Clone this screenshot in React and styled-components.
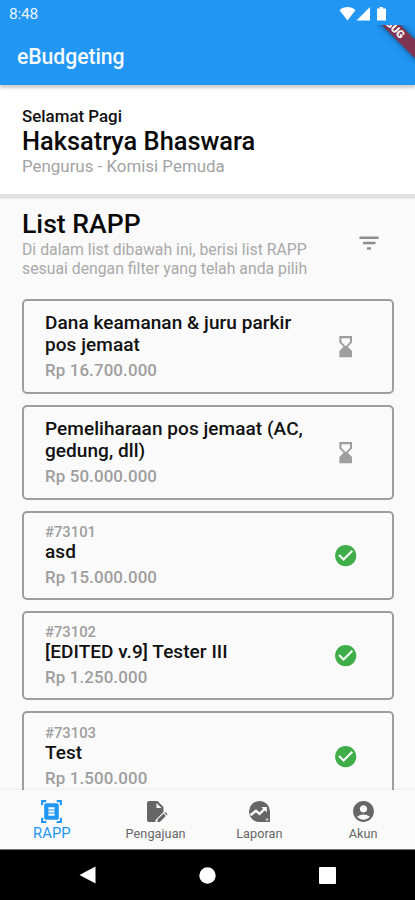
import React from 'react'
import styled, { createGlobalStyle } from 'styled-components'
import {
 MdHourglassBottom,
 MdCheckCircle,
 MdDocumentScanner,
 MdAccountCircle,
} from 'react-icons/md'

const GlobalStyle = createGlobalStyle`
 * {
  box-sizing: border-box;
 }
 body {
  margin: 0;
  font-family: Roboto, 'Liberation Sans', sans-serif;
 }
 h1, h2, h3, p {
  margin: 0;
 }
 svg {
  display: block;
 }
`

const Screen = styled.div`
 display: flex;
 flex-direction: column;
 width: 415px;
 height: 900px;
 overflow: hidden;
 background-color: #fafafa;
`

const StatusBar = styled.div`
 display: flex;
 flex-shrink: 0;
 align-items: center;
 justify-content: space-between;
 height: 25px;
 padding: 3px 28px 0 9px;
 background-color: #2196f3;
 color: #e9f4fe;
 font-size: 15.5px;
 letter-spacing: -0.2px;
`

const StatusIcons = styled.div`
 display: flex;
 align-items: center;
 padding-bottom: 1px;
`

const AppBar = styled.header`
 position: relative;
 z-index: 1;
 display: flex;
 flex-shrink: 0;
 align-items: center;
 height: 60px;
 padding: 3px 17px 0;
 overflow: hidden;
 background-color: #2196f3;
 box-shadow: 0 3px 3px rgba(0, 0, 0, 0.2);
 h1 {
  color: #f4faff;
  font-size: 21.2px;
  font-weight: 500;
  letter-spacing: -0.06px;
 }
`

const DebugBanner = styled.span`
 position: absolute;
 top: -7px;
 left: 340px;
 width: 101px;
 height: 13px;
 transform: rotate(45deg);
 background-color: #7f3450;
 box-shadow: 0 0 6px rgba(0, 0, 0, 0.5);
 color: #fff;
 font-size: 10.8px;
 font-weight: 900;
 line-height: 13px;
 text-align: center;
`

const Greeting = styled.section`
 flex-shrink: 0;
 height: 113px;
 padding: 21px 22px 0;
 border-bottom: 4px solid #e0e0e0;
 background-color: #fff;
 box-shadow: 0 1px 1px #ececec;
 p {
  color: #111;
  font-size: 16.9px;
  font-weight: 500;
  line-height: 21px;
 }
 h2 {
  color: #0a0a0a;
  font-size: 25.4px;
  font-weight: 500;
  line-height: 29px;
 }
 small {
  display: block;
  color: #a3a3a3;
  font-size: 16.9px;
  line-height: 21px;
 }
`

const Content = styled.main`
 flex: 1;
 min-height: 0;
 overflow: hidden;
 padding: 10px 21px 0 22px;
`

const ListHeader = styled.div`
 display: flex;
 align-items: flex-start;
 justify-content: space-between;
 height: 91px;
 padding-right: 15px;
 h2 {
  color: #0a0a0a;
  font-size: 26.6px;
  font-weight: 500;
  line-height: 32px;
 }
 p {
  color: #a9a9a9;
  font-size: 15.8px;
  line-height: 19px;
  white-space: nowrap;
 }
 svg {
  margin-top: 28px;
  color: #8e8e8e;
 }
`

const CardList = styled.div`
 display: flex;
 flex-direction: column;
 gap: 11px;
`

const Card = styled.article`
 display: flex;
 align-items: center;
 justify-content: space-between;
 flex-shrink: 0;
 height: ${({ $tall }) => ($tall ? '94.8px' : '89.4px')};
 padding: 1px 34px 0 21px;
 border: 2px solid #9e9e9e;
 border-radius: 5px;
`

const CardText = styled.div`
 width: 268px;
 small {
  display: block;
  color: #9e9e9e;
  font-size: 14.8px;
  font-weight: 500;
  line-height: 17px;
 }
 h3 {
  color: #111;
  font-size: 19px;
  font-weight: 500;
  line-height: 22px;
  letter-spacing: 0.06px;
  white-space: pre-line;
 }
 p {
  margin-top: 4px;
  color: #9e9e9e;
  font-size: 16.9px;
  font-weight: 500;
  line-height: 21px;
  letter-spacing: 0.12px;
 }
`

const BottomNav = styled.nav`
 display: grid;
 grid-template-columns: repeat(4, 1fr);
 flex-shrink: 0;
 height: 60px;
 border-bottom: 1px solid #777;
 background-color: #fafafa;
 box-shadow: 0 -1px 2px rgba(0, 0, 0, 0.06);
`

const NavItem = styled.a`
 display: flex;
 flex-direction: column;
 align-items: center;
 padding-top: 9px;
 color: ${({ $active }) => ($active ? '#2196f3' : '#666')};
 span {
  margin-top: ${({ $active }) => ($active ? '0' : '1px')};
  font-size: ${({ $active }) => ($active ? '14.8px' : '12.7px')};
  line-height: 18px;
  letter-spacing: 0.05px;
 }
`

const SystemNav = styled.div`
 display: flex;
 flex-shrink: 0;
 align-items: center;
 justify-content: space-between;
 height: 50px;
 padding: 0 79px;
 background-color: #000;
`

const FilterIcon = () => (
 <svg width="20" height="14" viewBox="0 0 20 14" fill="currentColor">
  <path d="M.5.5h19v2.500H.5zM4 5.800h12.500v2.500H4zM8 11.200h4v2.500H8z" />
 </svg>
)

const FileEditIcon = () => (
 <svg width="25" height="25" viewBox="0 0 25 25" fill="currentColor">
  <path d="M6 2h8.500l6 6v5l-8 8v2H6a2 2 0 0 1-2-2V4a2 2 0 0 1 2-2z" />
  <path d="M13.500 4v5h5z" fill="#fafafa" />
  <path d="M14.500 23v-2.400l6-6 2.400 2.400-6 6zM21.300 13.800l.9-.9 2.400 2.400-.9.900z" />
 </svg>
)

const ReportIcon = () => (
 <svg width="25" height="25" viewBox="0 0 25 25" fill="currentColor">
  <path d="M12.500 2A10.500 10.500 0 0 1 23 12.500V23H12.500a10.500 10.500 0 0 1 0-21z" />
  <path
   d="M3.500 16.300l5.500-4.500 3.600 3 6-5.800"
   fill="none"
   stroke="#fafafa"
   strokeWidth="2.400"
  />
  <path d="M14.300 8h5.500v5.500z" fill="#fafafa" />
  <path d="M18.500 20.700h3.200M20.100 19.100v3.200" stroke="#bbb" strokeWidth="1.200" />
 </svg>
)

const items = [
 { title: 'Dana keamanan & juru parkir\npos jemaat', price: 'Rp 16.700.000' },
 { title: 'Pemeliharaan pos jemaat (AC,\ngedung, dll)', price: 'Rp 50.000.000' },
 { code: '#73101', title: 'asd', price: 'Rp 15.000.000' },
 { code: '#73102', title: '[EDITED v.9] Tester III', price: 'Rp 1.250.000' },
 { code: '#73103', title: 'Test', price: 'Rp 1.500.000' },
]

const links = [
 { label: 'RAPP', icon: <MdDocumentScanner size={25} />, active: true },
 { label: 'Pengajuan', icon: <FileEditIcon /> },
 { label: 'Laporan', icon: <ReportIcon /> },
 { label: 'Akun', icon: <MdAccountCircle size={25} /> },
]

function App() {
 return (
  <>
   <GlobalStyle />
   <Screen>
    <StatusBar>
     <span>8:48</span>
     <StatusIcons>
      <svg width="48" height="16" viewBox="0 0 48 16" fill="#fff">
       <path d="M.5 4.300C5-.1 12-.1 16.500 4.300L8.500 14.500z" />
       <path d="M31 1v13.500H17.500z" />
       <path d="M40.500 1h3.500v1.500H47v12h-9v-12h2.500z" />
      </svg>
     </StatusIcons>
    </StatusBar>
    <AppBar>
     <h1>eBudgeting</h1>
     <DebugBanner>DEBUG</DebugBanner>
    </AppBar>
    <Greeting>
     <p>Selamat Pagi</p>
     <h2>Haksatrya Bhaswara</h2>
     <small>Pengurus - Komisi Pemuda</small>
    </Greeting>
    <Content>
     <ListHeader>
      <div>
       <h2>List RAPP</h2>
       <p>
        Di dalam list dibawah ini, berisi list RAPP
        <br />
        sesuai dengan filter yang telah anda pilih
       </p>
      </div>
      <FilterIcon />
     </ListHeader>
     <CardList>
      {items.map((item) => (
       <Card key={item.title} $tall={!item.code}>
        <CardText>
         {item.code && <small>{item.code}</small>}
         <h3>{item.title}</h3>
         <p>{item.price}</p>
        </CardText>
        {item.code ? (
         <MdCheckCircle size={25.4} color="#3fae49" />
        ) : (
         <MdHourglassBottom size={25.4} color="#9e9e9e" />
        )}
       </Card>
      ))}
     </CardList>
    </Content>
    <BottomNav>
     {links.map(({ label, icon, active }) => (
      <NavItem key={label} $active={active}>
       {icon}
       <span>{label}</span>
      </NavItem>
     ))}
    </BottomNav>
    <SystemNav>
     <svg width="17" height="18" viewBox="0 0 17 18" fill="#fff">
      <path d="M16.500 .5v17L.5 9z" />
     </svg>
     <svg width="17" height="17" viewBox="0 0 17 17" fill="#fff">
      <circle cx="8.500" cy="8.500" r="8.200" />
     </svg>
     <svg width="17" height="17" viewBox="0 0 17 17" fill="#fff">
      <rect width="17" height="17" rx="1" />
     </svg>
    </SystemNav>
   </Screen>
  </>
 )
}

export default App
